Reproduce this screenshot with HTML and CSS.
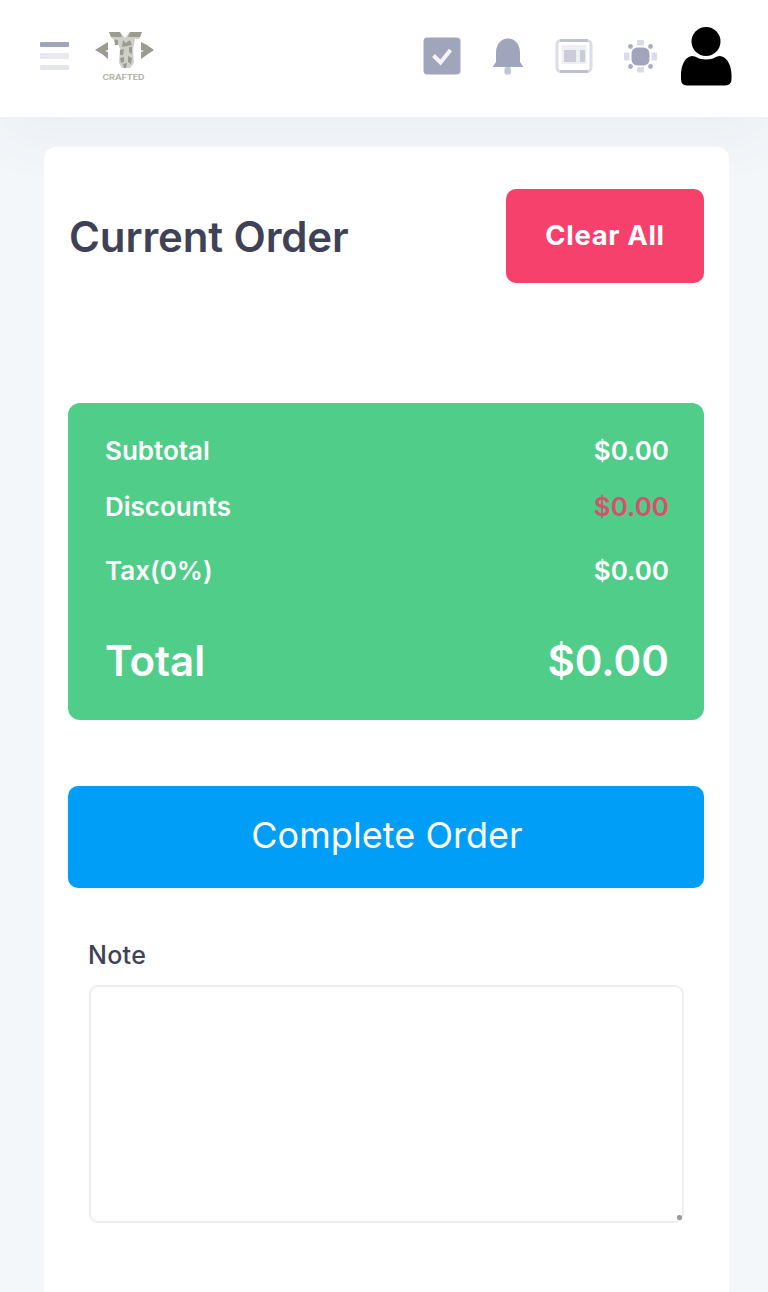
FILE: index.html
```html
<!DOCTYPE html>
<html lang="en">
<head>
<meta charset="utf-8">
<title>Current Order</title>
<link rel="stylesheet" href="styles.css">
</head>
<body>
<header class="topbar">
  <div class="brand">
    <svg class="menu" width="32" height="32" viewBox="0 0 32 32"><rect x="1" y="2" width="29" height="5" rx="1" fill="#a1a5bc"/><rect x="1" y="13" width="29" height="6" rx="1" fill="#e9eaf0"/><rect x="1" y="25" width="29" height="5" rx="1" fill="#e3e4ec"/></svg>
    <svg class="logo" width="62" height="54" viewBox="0 0 62 54">
      <path d="M14 3h11l5 6 5-6h12l-3 7h-4l-2 11 1 13-4 5h-8l-3-5 1-14-4-10h-4z" fill="#cfcfc9"/>
      <g fill="#9b9b92"><path d="M14 3h11l2 5H16zM35 3h12l-2 5H33zM19 10l4 1v5h-3zM28 11l3 3 4-3 2 5-5 1-5 1zM25 21l4-1-1 6h-3zM34 18h3v7l-3-2zM25 29l4-1v5l-3 1zM33 27l4 2-1 6-3-2zM28 35l4-1-1 5h-2z"/><path d="M0 21l8-5 5-3v8l-3 1 3 1v7l-6-5zM59 21l-7-5-6-3v8l3 1-3 1v7l7-5z"/></g>
      <text x="7.500" y="50.500" class="logo-text" textLength="42" lengthAdjust="spacingAndGlyphs">CRAFTED</text>
    </svg>
  </div>
  <nav class="actions">
    <svg width="38" height="38" viewBox="0 0 38 38"><rect x=".5" y=".5" width="37" height="37" rx="4" fill="#a1a5bb"/><path d="M10.500 18.500l7 7 10-12.500" fill="none" stroke="#f4f4f8" stroke-width="4"/></svg>
    <svg width="38" height="38" viewBox="0 0 38 38"><path d="M7 24V16C7 7 12 1.500 19 1.500S31 7 31 16v9l3.500 5H3.500L7 25z" fill="#a1a5bb"/><rect x="15.500" y="30" width="6.500" height="7.500" rx="2" fill="#c2c5d4"/></svg>
    <svg width="38" height="38" viewBox="0 0 38 38"><rect x="2" y="3.500" width="34" height="31" rx="4" fill="#fff" stroke="#dcdde6" stroke-width="3"/><path d="M5 3.500h28M5 34.500h28" stroke="#bdc0d0" stroke-width="3"/><path d="M6.500 8h25v19h-25z" fill="#eeeff3"/><path d="M9 13h12v12H9zM25 13h5v12h-5z" fill="#c9ccd9"/></svg>
    <svg width="38" height="38" viewBox="0 0 38 38"><rect x="10.500" y="10.500" width="18" height="18" rx="6" fill="#a1a5bb"/><g fill="#d9dbe5"><rect x="16" y="3" width="7" height="5.500" rx="1"/><rect x="16" y="30" width="7" height="5.500" rx="1"/><rect x="3" y="15.500" width="5.500" height="8" rx="1"/><rect x="30.500" y="15.500" width="5.500" height="8" rx="1"/></g><g fill="#a9adc1"><circle cx="9.500" cy="9.500" r="2.400"/><circle cx="29.500" cy="9.500" r="2.400"/><circle cx="9.500" cy="29.500" r="2.400"/><circle cx="29.500" cy="29.500" r="2.400"/></g></svg>
    <svg class="avatar" width="52" height="62" viewBox="0 0 52 62"><ellipse cx="26" cy="16.500" rx="14.500" ry="14.500"/><path d="M12 31C16 31 18 34.500 26 34.500S36 31 40 31C48 32 51.500 42 51.500 50V54Q51.500 60.500 45 60.500H7Q1 60.500 1 54V50C1 42 4 32 12 31z"/></svg>
  </nav>
</header>
<main class="page">
  <section class="card">
    <div class="card-head"><h1 class="title">Current Order</h1><button class="clear">Clear All</button></div>
    <div class="summary">
      <div class="row"><span>Subtotal</span><span>$0.00</span></div>
      <div class="row"><span>Discounts</span><span class="danger">$0.00</span></div>
      <div class="row row-last"><span>Tax(0%)</span><span>$0.00</span></div>
      <div class="row total"><span>Total</span><span>$0.00</span></div>
    </div>
    <button class="complete">Complete Order</button>
    <div class="note"><label class="note-label" for="note">Note</label>
      <div class="field"><textarea id="note" class="note-input"></textarea><span class="grip"></span></div>
    </div>
  </section>
</main>
</body>
</html>
```
FILE: styles.css
```css
* { box-sizing: border-box; }
body { margin: 0; height: 1292px; overflow: hidden; background: #f3f7fa; font-family: Inter, sans-serif; color: #3f4257; }
svg { display: block; flex: none; }
button { border: 0; margin: 0; color: #fff; font-family: inherit; }
.topbar { position: relative; height: 117px; padding: 0 35px 0 39px; background: #fff; display: flex; justify-content: space-between; align-items: center; box-shadow: 0 20px 56px rgba(76, 82, 100, .05); }
.brand { display: flex; align-items: center; gap: 24px; margin-top: -5px; }
.logo-text { font: 700 7px Inter, sans-serif; fill: #b4b4a6; }
.actions { display: flex; align-items: center; gap: 28px; margin-top: -5px; }
.avatar { margin-left: -7px; margin-right: 1px; }
.page { position: relative; padding: 30px 39px 0 44px; }
.card { height: 1180px; padding: 42px 25px 0 24px; background: #fff; border-radius: 12px; }
.card-head { display: flex; justify-content: space-between; align-items: flex-start; }
.title { margin: 22px 0 0 1px; font-size: 42px; line-height: 52px; font-weight: 600; letter-spacing: -.12px; white-space: nowrap; }
.clear { width: 198px; height: 94px; padding: 0 0 2px; background: #f5416c; border-radius: 10px; font-size: 27.5px; font-weight: 700; letter-spacing: .65px; }
.summary { height: 317px; margin-top: 120px; padding: 32px 35px 0 37px; background: #50cd89; border-radius: 12px; color: #fff; font-weight: 600; font-size: 26px; }
.row { display: flex; justify-content: space-between; height: 32px; line-height: 32px; white-space: nowrap; }
.row + .row { margin-top: 24px; }
.row + .row-last { margin-top: 32px; }
.row + .total { margin-top: 48px; height: 52px; line-height: 52px; font-size: 42px; }
.danger { color: #dc4e6b; }
.complete { display: block; width: 636px; height: 102px; margin-top: 66px; padding: 0 0 4px 2px; background: #009ef7; border-radius: 10px; font-size: 36px; font-weight: 400; letter-spacing: .05px; }
.note { padding: 50px 20px 0; }
.note-label { display: block; height: 34px; line-height: 34px; font-size: 25px; font-weight: 500; letter-spacing: .3px; }
.field { position: relative; margin-top: 13px; margin-left: 1px; }
.note-input { display: block; width: 595px; height: 238px; resize: none; border: 2px solid #ededf2; border-radius: 9px; background: #fff; }
.grip { position: absolute; right: 2px; bottom: 3px; width: 5px; height: 5px; border-radius: 2px; background: #9a9a9c; }
```
